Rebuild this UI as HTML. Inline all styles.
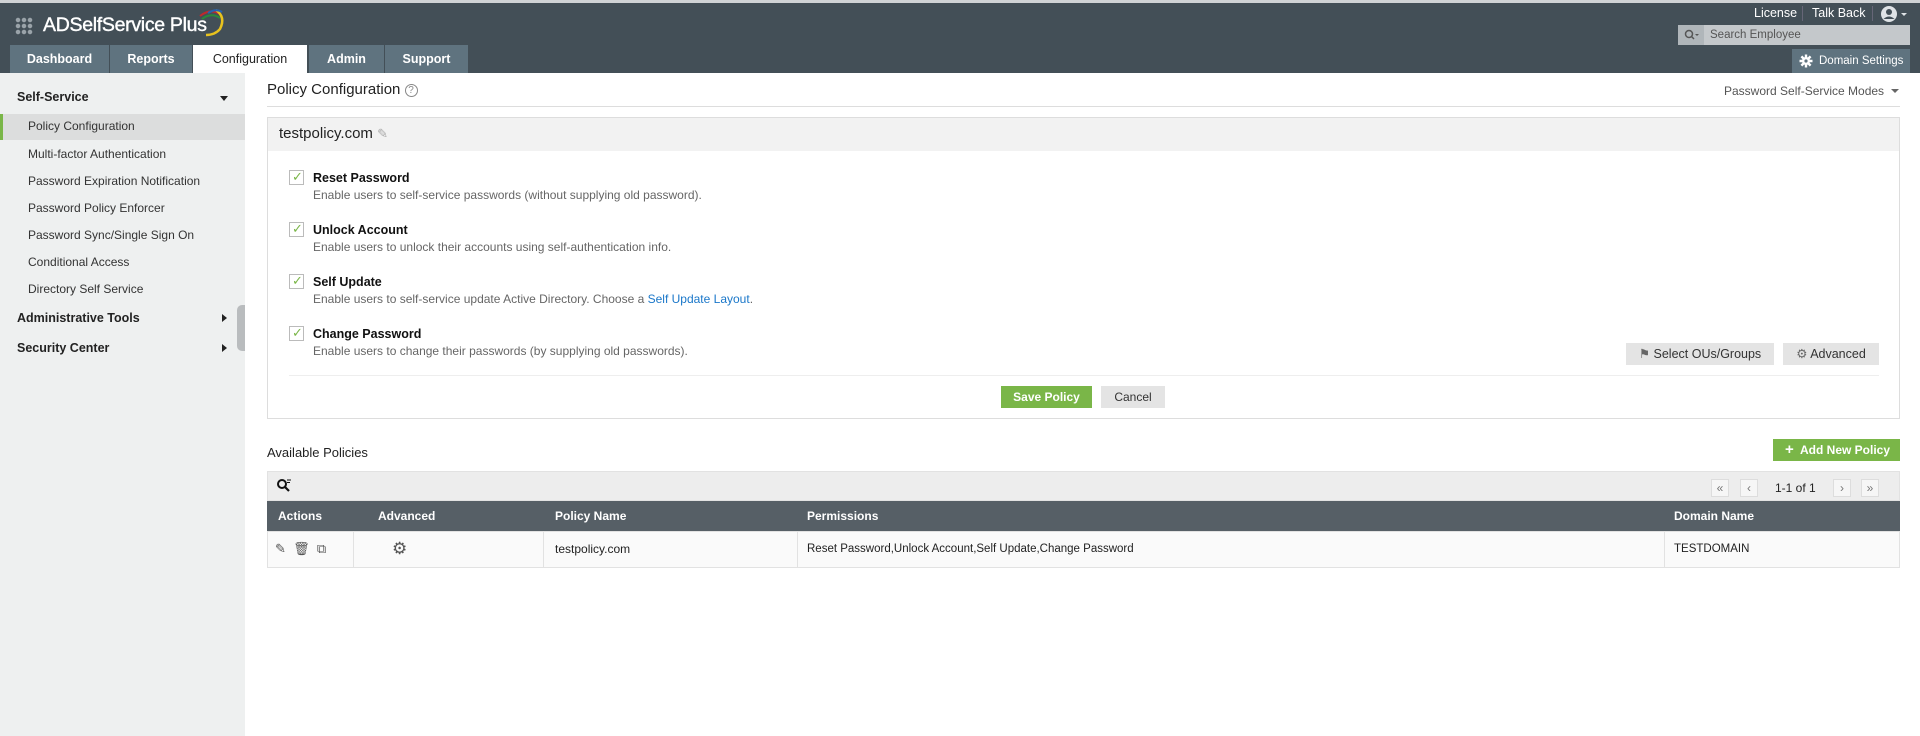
<!DOCTYPE html>
<html><head><meta charset="utf-8"><style>
*{box-sizing:border-box;margin:0;padding:0}
body{width:1920px;height:736px;overflow:hidden;background:#fff;font-family:"Liberation Sans",sans-serif;color:#333;position:relative}
.a{position:absolute}
.top{left:0;top:0;width:1920px;height:73px;background:#434f57;border-top:3px solid #d0d3d5}
.tab{top:45px;height:28px;background:#5f737f;color:#fff;font-size:12.5px;font-weight:bold;text-align:center;line-height:28px}
.side{left:0;top:73px;width:245px;height:663px;background:#eef0f0}
.si{left:28px;font-size:12px;color:#333}
.sh{left:17px;font-size:12.5px;font-weight:bold;color:#222}
.ttl{font-size:12.5px;font-weight:bold;color:#111;left:313px}
.dsc{font-size:12px;color:#666;left:313px}
.cb{left:289px;width:15px;height:15px;border:1px solid #bbb;background:#fff}
.btn{background:#e4e4e4;font-size:12.5px;color:#333;text-align:center}
.th{top:501px;height:30px;line-height:30px;color:#fff;font-size:12px;font-weight:bold}
.td{top:531px;height:36px;line-height:36px;font-size:12px;color:#222}
.pg{top:479px;width:18px;height:18px;border:1px solid #ddd;background:#f6f6f6;font-size:12px;color:#777;text-align:center;line-height:16px}
</style></head><body>
<div class="a top"></div>
<div class="a" style="left:15px;top:17px;width:18px;height:18px;background:
radial-gradient(circle,#9aa3a9 2px,transparent 2.5px) 0 0/6px 6px"></div>
<div class="a" style="left:43px;top:14px;font-size:19.5px;color:#fff;letter-spacing:-0.3px;-webkit-text-stroke:0.4px #fff">ADSelfService Plus</div>
<svg class="a" style="left:196px;top:7px" width="32" height="30"><path d="M4 9 Q14 1 24 7" stroke="#c0282d" stroke-width="2" fill="none"/><path d="M6 12 Q15 5 24 11" stroke="#2a8a3a" stroke-width="2" fill="none"/><path d="M20 3 Q30 10 24 22 Q19 28 10 28" stroke="#e8c21e" stroke-width="2.5" fill="none"/><path d="M12 6 Q20 1 26 5" stroke="#2563b0" stroke-width="2" fill="none"/></svg>
<div class="a tab" style="left:10px;width:99px">Dashboard</div>
<div class="a tab" style="left:110px;width:82px">Reports</div>
<div class="a tab" style="left:193px;width:114px;background:#fff;color:#222;font-weight:normal">Configuration</div>
<div class="a tab" style="left:309px;width:75px">Admin</div>
<div class="a tab" style="left:385px;width:83px">Support</div>
<div class="a" style="left:1754px;top:6px;font-size:12.5px;color:#fff">License</div>
<div class="a" style="left:1802px;top:6px;width:1px;height:15px;background:#667"></div>
<div class="a" style="left:1812px;top:6px;font-size:12.5px;color:#fff">Talk Back</div>
<div class="a" style="left:1872px;top:6px;width:1px;height:15px;background:#667"></div>
<svg class="a" style="left:1880px;top:5px" width="32" height="18"><circle cx="9" cy="9" r="8" fill="#dfe3e6"/><circle cx="9" cy="7" r="3" fill="#434f57"/><path d="M3.5 14 Q9 9 14.5 14" fill="#434f57"/><path d="M21 8 h6 l-3 3z" fill="#dfe3e6"/></svg>
<div class="a" style="left:1678px;top:25px;width:26px;height:20px;background:#b0b6ba"></div>
<svg class="a" style="left:1684px;top:29px" width="16" height="12"><circle cx="5" cy="5" r="3.5" stroke="#555" stroke-width="1.5" fill="none"/><path d="M7.5 7.5 L10 10" stroke="#555" stroke-width="1.5"/><path d="M11 5 h4 l-2 2z" fill="#555"/></svg>
<div class="a" style="left:1704px;top:25px;width:206px;height:20px;background:#c4c8cb;color:#555;font-size:11.5px;line-height:20px;padding-left:6px">Search Employee</div>
<div class="a" style="left:1792px;top:49px;width:118px;height:24px;background:#5f737f;color:#fff;font-size:11.5px;line-height:24px;padding-left:27px">Domain Settings</div>
<svg class="a" style="left:1799px;top:54px" width="14" height="14" viewBox="0 0 14 14"><g stroke="#fff" stroke-width="2.4"><path d="M7 0.5v13M0.5 7h13M2.4 2.4l9.2 9.2M11.6 2.4l-9.2 9.2"/></g><circle cx="7" cy="7" r="4" fill="#fff"/><circle cx="7" cy="7" r="1.6" fill="#5f737f"/></svg>

<div class="a side"></div>
<div class="a sh" style="top:90px">Self-Service</div>
<div class="a" style="left:220px;top:96px;border:4px solid transparent;border-top:5px solid #222"></div>
<div class="a" style="left:0;top:114px;width:245px;height:26px;background:#dcdddd;border-left:3px solid #7ab648"></div>
<div class="a si" style="top:119px">Policy Configuration</div>
<div class="a si" style="top:147px">Multi-factor Authentication</div>
<div class="a si" style="top:174px">Password Expiration Notification</div>
<div class="a si" style="top:201px">Password Policy Enforcer</div>
<div class="a si" style="top:228px">Password Sync/Single Sign On</div>
<div class="a si" style="top:255px">Conditional Access</div>
<div class="a si" style="top:282px">Directory Self Service</div>
<div class="a sh" style="top:311px">Administrative Tools</div>
<div class="a" style="left:222px;top:314px;border:4px solid transparent;border-left:5px solid #222"></div>
<div class="a sh" style="top:341px">Security Center</div>
<div class="a" style="left:222px;top:344px;border:4px solid transparent;border-left:5px solid #222"></div>
<div class="a" style="left:237px;top:305px;width:8px;height:46px;background:#b9bcbe;border-radius:5px 0 0 5px"></div>

<div class="a" style="left:267px;top:81px;font-size:15px;color:#222">Policy Configuration <span style="display:inline-block;width:13px;height:13px;border:1px solid #888;border-radius:50%;font-size:10px;line-height:11px;text-align:center;color:#888;vertical-align:1px">?</span></div>
<div class="a" style="left:1724px;top:84px;font-size:12px;color:#555">Password Self-Service Modes</div>
<div class="a" style="left:1891px;top:89px;border:4px solid transparent;border-top:4px solid #666"></div>
<div class="a" style="left:267px;top:106px;width:1633px;height:1px;background:#ddd"></div>

<div class="a" style="left:267px;top:117px;width:1633px;height:302px;border:1px solid #ddd"></div>
<div class="a" style="left:268px;top:118px;width:1631px;height:33px;background:#f2f2f2"></div>
<div class="a" style="left:279px;top:125px;font-size:15px;color:#222">testpolicy.com <span style="color:#aaa;font-size:13px">&#9998;</span></div>

<div class="a cb" style="top:170px"></div><div class="a" style="left:292px;top:169px;color:#7ab648;font-size:13px">&#10003;</div>
<div class="a ttl" style="top:171px">Reset Password</div>
<div class="a dsc" style="top:188px">Enable users to self-service passwords (without supplying old password).</div>
<div class="a cb" style="top:222px"></div><div class="a" style="left:292px;top:221px;color:#7ab648;font-size:13px">&#10003;</div>
<div class="a ttl" style="top:223px">Unlock Account</div>
<div class="a dsc" style="top:240px">Enable users to unlock their accounts using self-authentication info.</div>
<div class="a cb" style="top:274px"></div><div class="a" style="left:292px;top:273px;color:#7ab648;font-size:13px">&#10003;</div>
<div class="a ttl" style="top:275px">Self Update</div>
<div class="a dsc" style="top:292px">Enable users to self-service update Active Directory. Choose a <span style="color:#1a77c9">Self Update Layout</span>.</div>
<div class="a cb" style="top:326px"></div><div class="a" style="left:292px;top:325px;color:#7ab648;font-size:13px">&#10003;</div>
<div class="a ttl" style="top:327px">Change Password</div>
<div class="a dsc" style="top:344px">Enable users to change their passwords (by supplying old passwords).</div>

<div class="a btn" style="left:1626px;top:343px;width:148px;height:22px;line-height:22px"><span style="color:#666">&#9873;</span> Select OUs/Groups</div>
<div class="a btn" style="left:1783px;top:343px;width:96px;height:22px;line-height:22px"><span style="color:#666">&#9881;</span> Advanced</div>
<div class="a" style="left:289px;top:375px;width:1590px;height:1px;background:#eee"></div>
<div class="a" style="left:1001px;top:386px;width:91px;height:22px;background:#7ab648;color:#fff;font-size:12px;font-weight:bold;text-align:center;line-height:22px">Save Policy</div>
<div class="a btn" style="left:1101px;top:386px;width:64px;height:22px;line-height:22px;font-size:12px">Cancel</div>

<div class="a" style="left:267px;top:445px;font-size:13px;color:#222">Available Policies</div>
<div class="a" style="left:1773px;top:439px;width:127px;height:22px;background:#7ab648;color:#fff;font-size:12px;font-weight:bold;line-height:22px;padding-left:12px"><span style="font-size:15px">+</span>&nbsp; Add New Policy</div>
<div class="a" style="left:267px;top:471px;width:1633px;height:30px;background:#ededed;border:1px solid #e2e2e2"></div>
<svg class="a" style="left:276px;top:478px" width="16" height="16"><circle cx="6" cy="6" r="4" stroke="#111" stroke-width="2" fill="none"/><path d="M9 9 L13 13" stroke="#111" stroke-width="2.2"/><path d="M11 2h4M11 4.5h3" stroke="#111" stroke-width="1"/></svg>
<div class="a pg" style="left:1711px">&laquo;</div>
<div class="a pg" style="left:1740px">&lsaquo;</div>
<div class="a" style="left:1775px;top:481px;font-size:12px;color:#222">1-1 of 1</div>
<div class="a pg" style="left:1833px">&rsaquo;</div>
<div class="a pg" style="left:1861px">&raquo;</div>

<div class="a" style="left:267px;top:501px;width:1633px;height:30px;background:#565f66"></div>
<div class="a th" style="left:278px">Actions</div>
<div class="a th" style="left:378px">Advanced</div>
<div class="a th" style="left:555px">Policy Name</div>
<div class="a th" style="left:807px">Permissions</div>
<div class="a th" style="left:1674px">Domain Name</div>
<div class="a" style="left:267px;top:531px;width:1633px;height:37px;background:#fafafa;border:1px solid #e2e2e2"></div>
<div class="a" style="left:353px;top:531px;width:1px;height:37px;background:#e2e2e2"></div>
<div class="a" style="left:543px;top:531px;width:1px;height:37px;background:#e2e2e2"></div>
<div class="a" style="left:797px;top:531px;width:1px;height:37px;background:#e2e2e2"></div>
<div class="a" style="left:1664px;top:531px;width:1px;height:37px;background:#e2e2e2"></div>
<div class="a td" style="left:275px;color:#555;font-size:13px">&#9998;&nbsp; &#128465;&nbsp; &#10697;</div>
<div class="a td" style="left:392px;font-size:17px;color:#555">&#9881;</div>
<div class="a td" style="left:555px">testpolicy.com</div>
<div class="a td" style="left:807px;font-size:11.5px">Reset Password,Unlock Account,Self Update,Change Password</div>
<div class="a td" style="left:1674px;font-size:11.5px">TESTDOMAIN</div>
</body></html>
